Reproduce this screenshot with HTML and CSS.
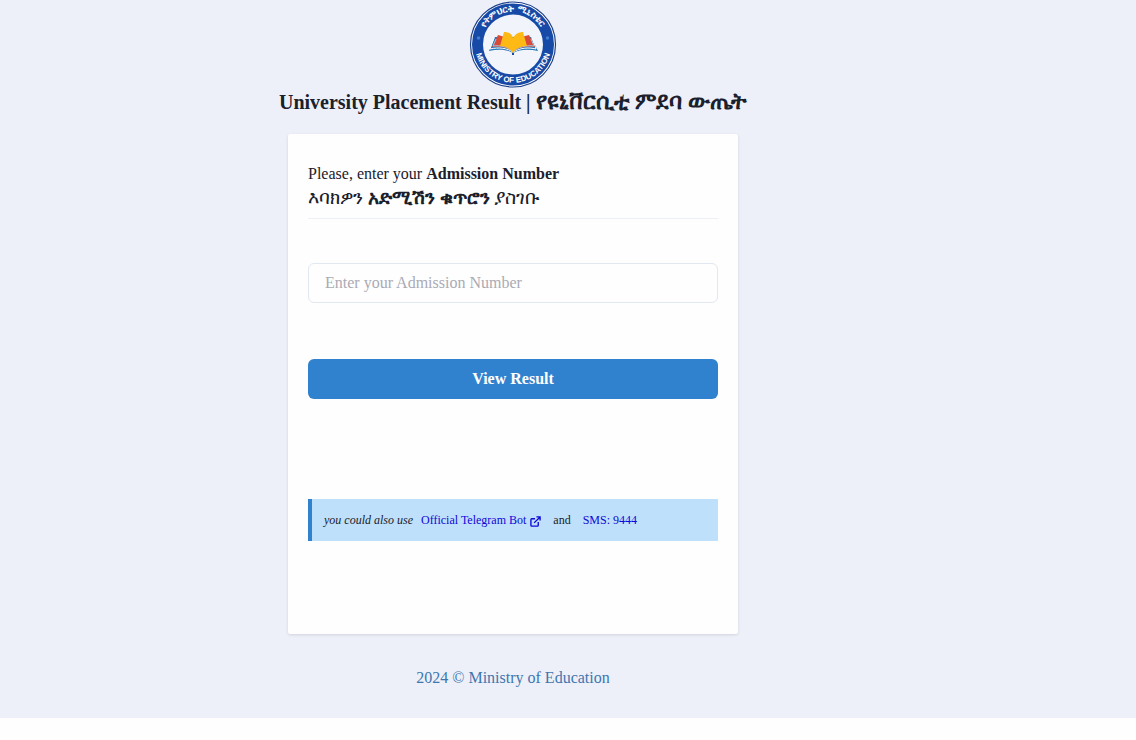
FILE: index.html
```html
<!DOCTYPE html>
<html lang="en">

<head>
  <meta charset="UTF-8">
  <meta name="viewport" content="width=device-width, initial-scale=1.0">
  <title>University Placement Result</title>
  <link rel="stylesheet" href="styles.css">
</head>

<body>
  <div class="page">
    <header class="header">
      <svg class="logo" viewBox="0 0 88 88" role="img" aria-label="Ministry of Education">
        <defs>
          <path id="ring-top" d="M11.500 44a32.500 32.500 0 0 1 65 0" />
          <path id="ring-bottom" d="M5.800 36v8.500a38.200 38.200 0 0 0 76.400 0v-8.500" />
        </defs>
        <circle cx="44" cy="44.500" r="42.500" fill="#fff" stroke="#1d4089" stroke-width="1.200" />
        <circle cx="44" cy="44.500" r="35.500" fill="#f1f4fb" stroke="#1749a6" stroke-width="11" />
        <circle cx="9.500" cy="38" r="1.800" fill="#3f7bd0" />
        <circle cx="78.500" cy="38" r="1.800" fill="#3f7bd0" />
        <text class="logo-text logo-amharic"><textPath href="#ring-top" startOffset="50%">የትምህርት ሚኒስቴር</textPath></text>
        <text class="logo-text"><textPath href="#ring-bottom" startOffset="50%">MINISTRY OF EDUCATION</textPath></text>
        <path d="M26 37l-6 14c9-2 17-2 24 2 7-4 16-4 25-2l-7-14z" fill="#2877b8" />
        <path d="M25 38l-4 11c9-2 17-1 23 3 7-4 15-5 23-3l-4-11" fill="none" stroke="#fff" stroke-width="1" />
        <path d="M29 35l-6 12c8-1 15 0 21 5 6-5 14-6 22-5l-6-12-8 2-8 7-8-7z" fill="#d94b36" />
        <path d="M27 39l-3 7c8-1 15 1 20 6 5-5 13-7 21-6l-3-7" fill="none" stroke="#9fc6e6" stroke-width="1" />
        <path d="M35 32c5 0 8 2 9 6 2-4 6-6 10-6l4 14c-6 0-11 2-14 7-3-5-8-7-13-7z" fill="#ffb915" />
        <path d="M43 53h2v2h-2z" fill="#1749a6" />
      </svg>
      <h1 class="title">University Placement Result | <span class="title-amharic">የዩኒቨርሲቲ ምደባ ውጤት</span></h1>
    </header>

    <main class="card">
      <form>
        <label class="prompt" for="admission">
          <span>Please, enter your <strong>Admission Number</strong></span>
          <span class="amharic">እባክዎን <strong>አድሚሽን ቁጥሮን</strong> ያስገቡ</span>
        </label>
        <input class="field" type="text" id="admission" placeholder="Enter your Admission Number">
        <button class="submit" type="submit">View Result</button>
      </form>

      <div class="notice">
        <em>you could also use</em>
        <a class="bot" href="#">Official Telegram Bot
          <svg class="external" viewBox="0 0 24 24" aria-hidden="true">
            <path d="M11 6H4a2 2 0 0 0-2 2v12a2 2 0 0 0 2 2h12a2 2 0 0 0 2-2v-7" />
            <path d="M14 2h8v8M22 2L9 15" />
          </svg>
        </a>
        <span>and</span>
        <a href="#">SMS: 9444</a>
      </div>
    </main>

    <footer class="footer">2024 © Ministry of Education</footer>
  </div>
</body>

</html>
```

FILE: styles.css
```css
* {
  box-sizing: border-box;
}

body {
  margin: 0;
  background: #fefefe;
  color: #1a202c;
  font-family: "Liberation Serif", "Times New Roman", serif;
  font-size: 16px;
  line-height: 24px;
}

.page {
  display: flex;
  flex-direction: column;
  align-items: center;
  padding: 0 110px 28px 0;
  background: #edf0f9;
}

.header {
  display: flex;
  flex-direction: column;
  align-items: center;
}

.logo {
  width: 88px;
  height: 88px;
}

.logo-text {
  fill: #fff;
  font-family: "Liberation Sans", Arial, sans-serif;
  font-size: 8px;
  font-weight: bold;
  text-anchor: middle;
}

.logo-amharic {
  font-size: 9px;
}

.title {
  margin: 0;
  font-size: 20px;
  line-height: 28px;
  text-align: center;
}

.title-amharic {
  font-size: 23px;
}

.card {
  width: 100%;
  max-width: 450px;
  min-height: 500px;
  margin-top: 18px;
  padding: 28px 20px;
  background: #fefefe;
  border-radius: 2px;
  box-shadow: 0 1px 3px rgba(0, 0, 0, 0.12);
}

.prompt {
  display: flex;
  flex-direction: column;
  padding-bottom: 8px;
  border-bottom: 1px solid #edf0f5;
}

.amharic {
  font-size: 19px;
}

.field {
  display: block;
  width: 100%;
  height: 40px;
  margin-top: 44px;
  padding: 0 16px;
  border: 1px solid #e2e8f0;
  border-radius: 6px;
  background: transparent;
  color: inherit;
  font: inherit;
}

.field::placeholder {
  color: #aaaab4;
}

.submit {
  display: block;
  width: 100%;
  height: 40px;
  margin-top: 56px;
  border: none;
  border-radius: 6px;
  background: #3182ce;
  color: #fff;
  font: inherit;
  font-weight: bold;
  cursor: pointer;
}

.submit:hover {
  background: #2b6cb0;
}

.notice {
  display: flex;
  align-items: center;
  margin-top: 100px;
  padding: 9px 12px;
  border-left: 4px solid #3182ce;
  background: #bee0fa;
  font-size: 12px;
}

.notice em {
  margin-right: 8px;
}

.notice span {
  margin: 0 12px;
}

.notice a {
  color: #1007d8;
  text-decoration: none;
}

.bot {
  display: flex;
  align-items: center;
  gap: 4px;
}

.external {
  width: 11px;
  height: 11px;
  margin-top: 3px;
  fill: none;
  stroke: currentColor;
  stroke-width: 3;
}

.footer {
  margin-top: 32px;
  color: #3f76ae;
}
```
